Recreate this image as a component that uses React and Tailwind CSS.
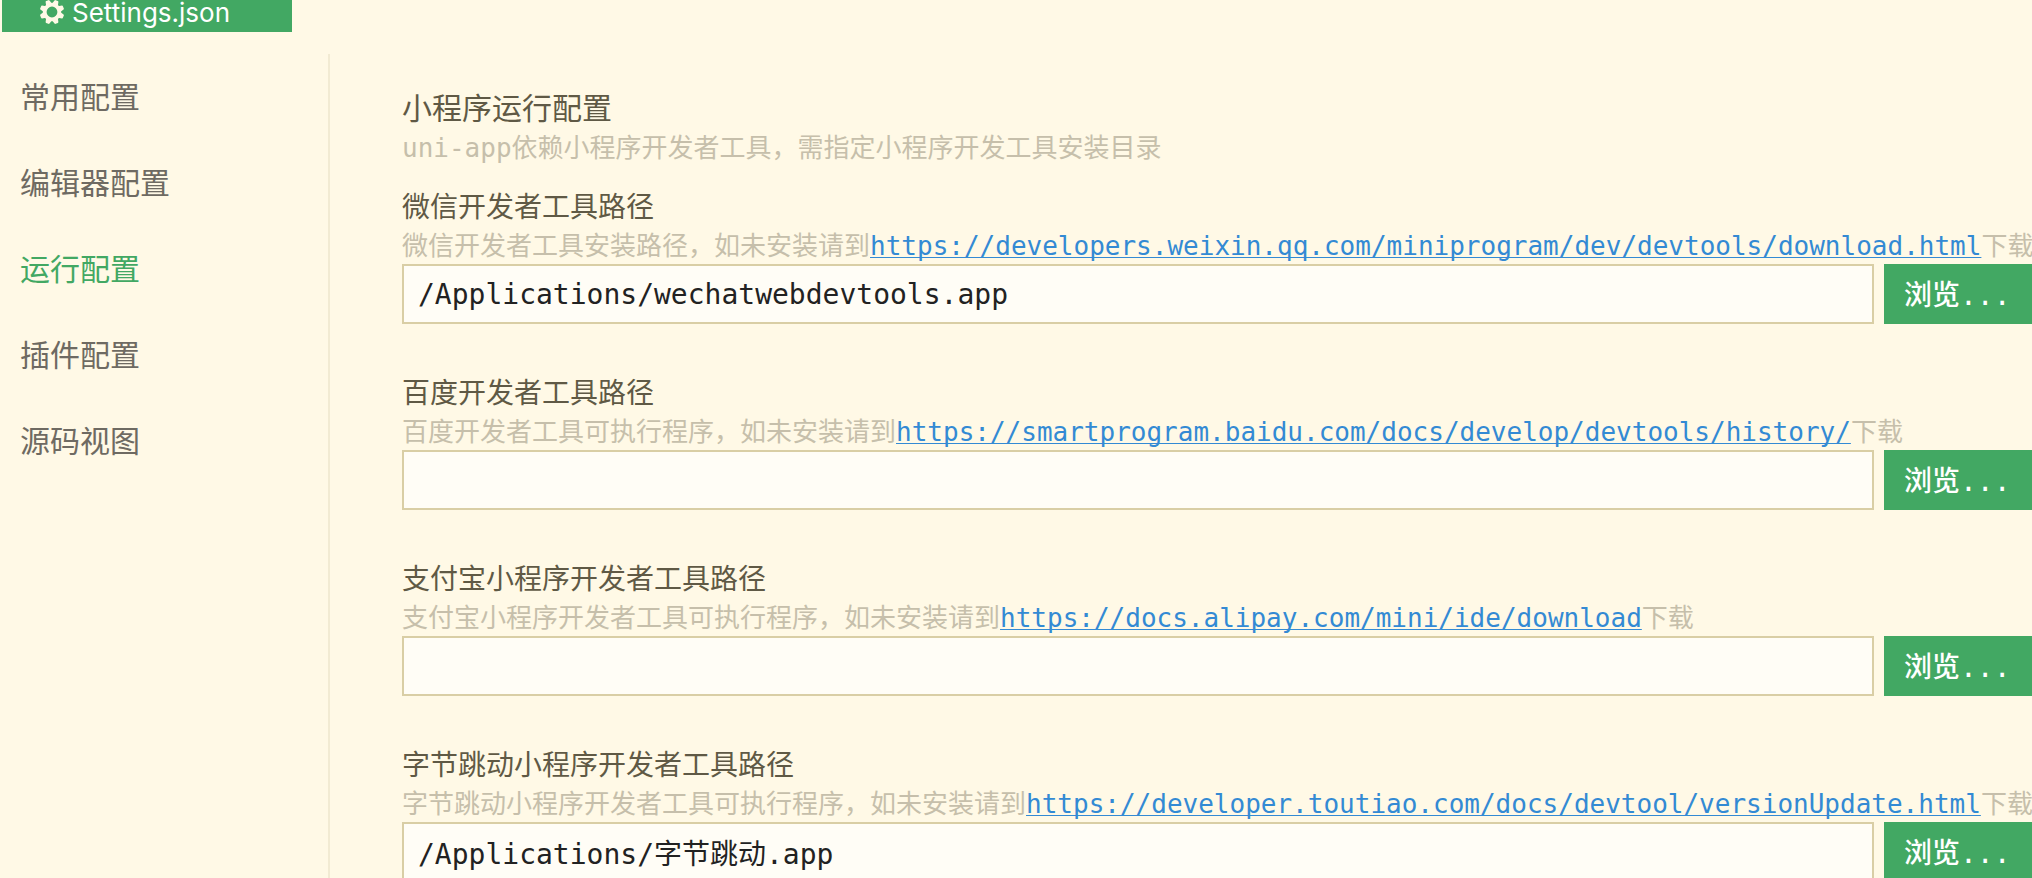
import React from "react";

const navItems = ["常用配置", "编辑器配置", "运行配置", "插件配置", "源码视图"];
const activeItem = "运行配置";

const tools = [
  {
    id: "weixin",
    label: "微信开发者工具路径",
    hint: "微信开发者工具安装路径，如未安装请到",
    url: "https://developers.weixin.qq.com/miniprogram/dev/devtools/download.html",
    path: "/Applications/wechatwebdevtools.app",
  },
  {
    id: "baidu",
    label: "百度开发者工具路径",
    hint: "百度开发者工具可执行程序，如未安装请到",
    url: "https://smartprogram.baidu.com/docs/develop/devtools/history/",
    path: "",
  },
  {
    id: "alipay",
    label: "支付宝小程序开发者工具路径",
    hint: "支付宝小程序开发者工具可执行程序，如未安装请到",
    url: "https://docs.alipay.com/mini/ide/download",
    path: "",
  },
  {
    id: "toutiao",
    label: "字节跳动小程序开发者工具路径",
    hint: "字节跳动小程序开发者工具可执行程序，如未安装请到",
    url: "https://developer.toutiao.com/docs/devtool/versionUpdate.html",
    path: "/Applications/字节跳动.app",
  },
];

const teeth = [22.5, 67.5, 112.5, 157.5, 202.5, 247.5, 292.5, 337.5];

function GearIcon() {
  return (
    <svg viewBox="0 0 24 24" className="size-6 shrink-0 text-[#fff9e6]" aria-hidden="true">
      <circle cx="12" cy="12" r="7.3" fill="none" stroke="currentColor" strokeWidth="3.8" />
      {teeth.map((angle) => (
        <path
          key={angle}
          d="M8.9 4.2 9.9 0.4Q10.1-0.3 10.8-0.3H13.2Q13.9-0.3 14.1 0.4L15.1 4.2Z"
          fill="currentColor"
          transform={`rotate(${angle} 12 12)`}
        />
      ))}
    </svg>
  );
}

function ToolPath({ tool }) {
  return (
    <section>
      <label htmlFor={tool.id} className="block pt-0.5 text-[28px] leading-10 text-[#5f5945]">
        {tool.label}
      </label>
      <p className="whitespace-nowrap text-[26px] leading-9 text-[#c6bfab]">
        {tool.hint}
        <a href={tool.url} className="text-[#338ad4] underline decoration-1 underline-offset-2 [text-decoration-skip-ink:none]">
          {tool.url}
        </a>
        下载
      </p>
      <div className="flex gap-2.5">
        <input
          id={tool.id}
          type="text"
          defaultValue={tool.path}
          className="h-[60px] min-w-0 flex-1 border-2 border-[#d9cea5] bg-[#fffdf6] px-3.5 text-[28px] text-[#222222] outline-none"
        />
        <button type="button" className="h-[60px] w-[148px] shrink-0 bg-[#42a863] pl-5 pt-1 text-left text-[28px] font-medium text-white">
          浏览...
        </button>
      </div>
    </section>
  );
}

export default function App() {
  return (
    <div className="flex h-screen flex-col overflow-hidden bg-[#fff9e6] font-['DejaVu_Sans_Mono','Noto_Sans_CJK_SC',monospace]">
      <header className="flex shrink-0 pb-[22px] pl-0.5">
        <button
          type="button"
          className="flex h-8 w-[290px] items-start gap-2 bg-[#42a863] pl-[38px] font-[Inter,'Noto_Sans_CJK_SC',sans-serif] text-[26px] leading-[26px] text-white"
        >
          <GearIcon />
          Settings.json
        </button>
      </header>
      <div className="flex min-h-0 flex-1">
        <nav className="w-[330px] shrink-0 border-r-2 border-[#f2ebd3] pt-px">
          <ul>
            {navItems.map((item) => (
              <li key={item}>
                <a
                  href="#"
                  className={
                    item === activeItem
                      ? "block pl-5 text-[30px] leading-[86px] text-[#42a863]"
                      : "block pl-5 text-[30px] leading-[86px] text-[#6e6a62]"
                  }
                >
                  {item}
                </a>
              </li>
            ))}
          </ul>
        </nav>
        <main className="min-w-0 flex-1 pl-[72px] pt-[34px]">
          <h1 className="text-[30px] leading-[42px] text-[#5f5945]">小程序运行配置</h1>
          <p className="text-[26px] leading-9 text-[#c6bfab]">
            uni-app依赖小程序开发者工具，需指定小程序开发工具安装目录
          </p>
          <div className="flex flex-col gap-12 pt-5">
            {tools.map((tool) => (
              <ToolPath key={tool.id} tool={tool} />
            ))}
          </div>
        </main>
      </div>
    </div>
  );
}
